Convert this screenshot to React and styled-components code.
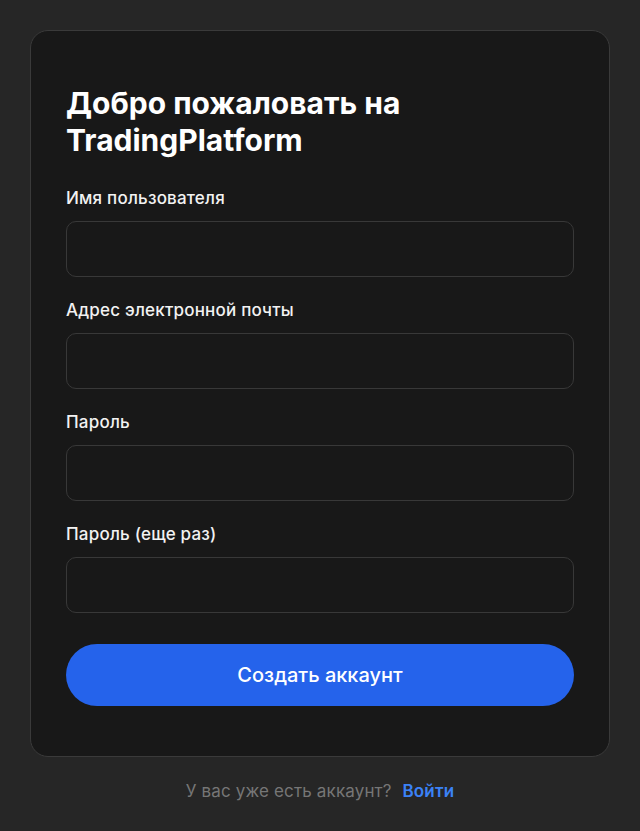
import React from 'react'
import styled, { createGlobalStyle } from 'styled-components'

const GlobalStyle = createGlobalStyle`
  html, body {
    margin: 0;
    padding: 0;
    background: #262626;
  }
  body {
    font-family: Inter, "Noto Sans", sans-serif;
    -webkit-font-smoothing: antialiased;
  }
  * {
    box-sizing: border-box;
  }
`

const Page = styled.div`
  min-height: 831px;
  padding: 30px 30px 0;
  display: flex;
  flex-direction: column;
  align-items: center;
`

const Card = styled.form`
  width: 580px;
  background: #181818;
  border: 1px solid #3a3a3a;
  border-radius: 18px;
  padding: 54px 35px 50px;
  display: flex;
  flex-direction: column;
`

const Title = styled.h1`
  margin: 0 0 27px;
  font-size: 30px;
  line-height: 37px;
  font-weight: 700;
  color: #ffffff;
`

const Fields = styled.div`
  display: flex;
  flex-direction: column;
  gap: 21px;
`

const Field = styled.label`
  display: flex;
  flex-direction: column;
  gap: 11px;
`

const LabelText = styled.span`
  font-size: 17px;
  line-height: 24px;
  font-weight: 500;
  letter-spacing: 0.2px;
  color: #f2f2f2;
`

const Input = styled.input`
  height: 56px;
  width: 100%;
  background: #181818;
  border: 1px solid #383838;
  border-radius: 10px;
  padding: 0 16px;
  font-family: inherit;
  font-size: 16px;
  color: #fff;
  outline: none;
`

const Submit = styled.button`
  margin-top: 31px;
  height: 62px;
  width: 100%;
  border: none;
  border-radius: 31px;
  background: #2563eb;
  color: #ffffff;
  font-family: inherit;
  font-size: 20px;
  font-weight: 500;
  cursor: pointer;
`

const Footer = styled.p`
  margin: 22px 0 0;
  font-size: 17px;
  line-height: 24px;
  letter-spacing: 0.15px;
  color: #767676;
`

const SignIn = styled.a`
  margin-left: 11px;
  color: #3b82f6;
  font-weight: 600;
  text-decoration: none;
`

const fields = [
  { label: 'Имя пользователя', type: 'text' },
  { label: 'Адрес электронной почты', type: 'email' },
  { label: 'Пароль', type: 'password' },
  { label: 'Пароль (еще раз)', type: 'password' },
]

export default function App() {
  return (
    <>
      <GlobalStyle />
      <Page>
        <Card onSubmit={(e) => e.preventDefault()}>
          <Title>
            Добро пожаловать на
            <br />
            TradingPlatform
          </Title>
          <Fields>
            {fields.map((f) => (
              <Field key={f.label}>
                <LabelText>{f.label}</LabelText>
                <Input type={f.type} />
              </Field>
            ))}
          </Fields>
          <Submit type="submit">Создать аккаунт</Submit>
        </Card>
        <Footer>
          У вас уже есть аккаунт?
          <SignIn href="#">Войти</SignIn>
        </Footer>
      </Page>
    </>
  )
}
